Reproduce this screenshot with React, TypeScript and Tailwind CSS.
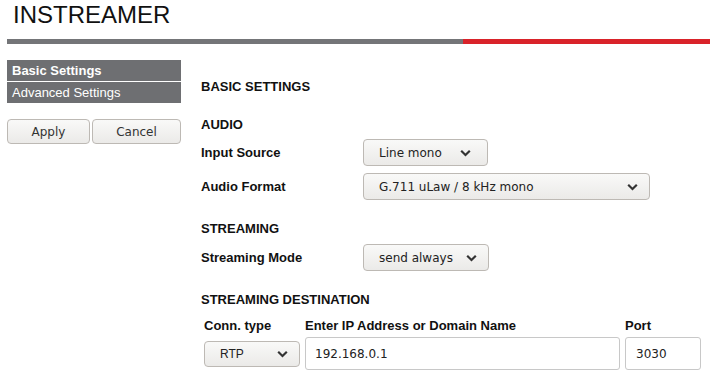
const sans = "font-['Liberation_Sans',Arial,sans-serif]";
const dejavu = "font-['DejaVu_Sans',Verdana,sans-serif]";

const Chevron = () => (
    <svg width="11" height="8" viewBox="0 0 11 8" className="shrink-0">
        <polyline points="1.2,1.8 5.5,6 9.8,1.8" fill="none" stroke="#333" strokeWidth="2.2" />
    </svg>
);

interface SelectBoxProps {
    value: string;
    className: string;
    textClass?: string;
}

const SelectBox = ({ value, className, textClass = dejavu + ' text-[12px]' }: SelectBoxProps) => (
    <div
        className={`flex items-center justify-between pl-[15px] rounded-[4px] border border-[#bdb9b4] bg-gradient-to-b from-[#f9f9f8] to-[#ebeae8] text-[#222] ${className}`}
    >
        <span className={textClass}>{value}</span>
        <Chevron />
    </div>
);

const SectionTitle = ({ children }: { children: string }) => (
    <div className={`h-[20px] flex items-center ${sans} text-[13px] font-bold text-[#111]`}>{children}</div>
);

const FieldRow = ({ label, children, className }: { label: string; children: React.ReactNode; className: string }) => (
    <div className={`flex items-center h-[27px] ${className}`}>
        <div className={`w-[162px] ${sans} text-[13px] font-bold text-[#111]`}>{label}</div>
        {children}
    </div>
);

export default function App() {
    return (
        <div className="w-[710px] h-[379px] bg-white pl-[7px] overflow-hidden">
            <h1 className={`mt-[1px] pl-[6px] h-[28px] leading-[28px] ${sans} text-[24px] text-[#111]`}>INSTREAMER</h1>
            <div className="mt-[10px] flex h-[5px]">
                <div className="w-[456px] bg-[#747578]" />
                <div className="flex-1 bg-[#d9232a]" />
            </div>

            <div className="flex">
                {/* left menu */}
                <div className="w-[174px] mt-[16px]">
                    <div className={`h-[21px] flex items-center px-[5px] bg-[#6e6f72] text-white ${sans} text-[13px] font-bold`}>
                        Basic Settings
                    </div>
                    <div className={`mt-[1px] h-[21px] flex items-center px-[5px] bg-[#6e6f72] text-white ${sans} text-[13px]`}>
                        Advanced Settings
                    </div>
                    <div className="mt-[16px] flex gap-[2px]">
                        <button className={`w-[83px] h-[25px] rounded-[4px] border border-[#bdb9b4] bg-gradient-to-b from-[#f9f9f8] to-[#ebeae8] ${dejavu} text-[12px] text-[#333]`}>
                            Apply
                        </button>
                        <button className={`w-[89px] h-[25px] rounded-[4px] border border-[#bdb9b4] bg-gradient-to-b from-[#f9f9f8] to-[#ebeae8] ${dejavu} text-[12px] text-[#333]`}>
                            Cancel
                        </button>
                    </div>
                </div>

                {/* settings */}
                <div className="ml-[20px] flex-1 flex flex-col">
                    <div className="mt-[33px]">
                        <SectionTitle>BASIC SETTINGS</SectionTitle>
                    </div>
                    <div className="mt-[18px]">
                        <SectionTitle>AUDIO</SectionTitle>
                    </div>
                    <FieldRow label="Input Source" className="mt-[4px]">
                        <SelectBox value="Line mono" className="w-[125px] h-[27px] pr-[16px]" />
                    </FieldRow>
                    <FieldRow label="Audio Format" className="mt-[7px]">
                        <SelectBox value="G.711 uLaw / 8 kHz mono" className="w-[287px] h-[27px] pr-[11px]" />
                    </FieldRow>
                    <div className="mt-[19px]">
                        <SectionTitle>STREAMING</SectionTitle>
                    </div>
                    <FieldRow label="Streaming Mode" className="mt-[5px]">
                        <SelectBox value="send always" className="w-[126px] h-[27px] pr-[11px]" />
                    </FieldRow>
                    <div className="mt-[19px]">
                        <SectionTitle>STREAMING DESTINATION</SectionTitle>
                    </div>

                    <div className={`mt-[6px] pl-[3px] grid grid-cols-[96px_315px_76px] gap-x-[5px] ${sans} text-[13px] font-bold text-[#111]`}>
                        <div className="h-[19px] flex items-center">Conn. type</div>
                        <div className="h-[19px] flex items-center">Enter IP Address or Domain Name</div>
                        <div className="h-[19px] flex items-center">Port</div>
                    </div>
                    <div className="mt-[2px] pl-[3px] grid grid-cols-[96px_315px_76px] gap-x-[5px] h-[33px] items-center">
                        <SelectBox
                            value="RTP"
                            className="h-[26px] pr-[11px]"
                            textClass={`${sans} text-[12px]`}
                        />
                        <div className={`h-[33px] flex items-center pl-[9px] rounded-[3px] border border-[#c8c8c8] bg-white ${dejavu} text-[12px] text-[#222]`}>
                            192.168.0.1
                        </div>
                        <div className={`h-[33px] flex items-center pl-[10px] rounded-[3px] border border-[#c8c8c8] bg-white ${dejavu} text-[12px] text-[#222]`}>
                            3030
                        </div>
                    </div>
                </div>
            </div>
        </div>
    );
}
